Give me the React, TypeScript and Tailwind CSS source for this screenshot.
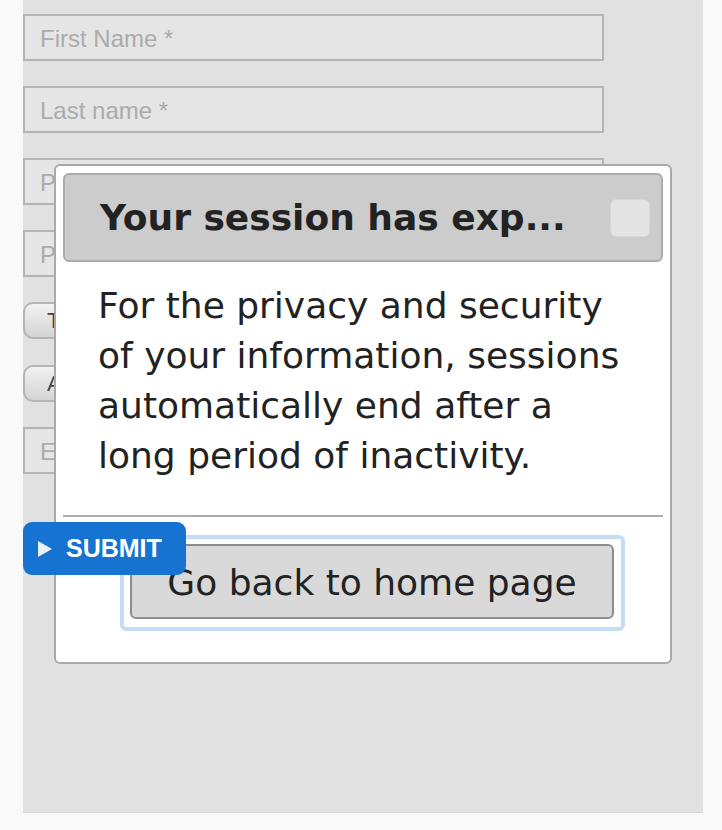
import { X } from "lucide-react";

const arial = "font-['Liberation_Sans',Arial,sans-serif]";
const dejavu = "font-['DejaVu_Sans',Verdana,sans-serif]";

function Field({ label }: { label: string }) {
  return (
    <div
      className={`flex h-[47px] w-[581px] items-center border-2 border-[#b4b4b4] bg-[#e5e5e5] pl-[15px] pt-[2px] text-[24px] text-[#ababab] ${arial}`}
    >
      {label}
    </div>
  );
}

function Pill({ label }: { label: string }) {
  return (
    <div
      className={`flex h-[37px] w-[140px] items-center rounded-[10px] border-2 border-[#b4b4b4] bg-gradient-to-b from-[#f2f2f2] to-[#d4d4d4] pl-[22px] text-[22px] text-[#444] ${arial}`}
    >
      {label}
    </div>
  );
}

export default function App() {
  return (
    <div className="relative min-h-[830px] bg-[#f9f9f9]">
      {/* Form panel behind the dialog */}
      <div className="ml-[23px] flex h-[813px] w-[680px] flex-col border-b border-[#d8d8d8] bg-[#e1e1e1] pt-[14px]">
        <div className="flex flex-col gap-[25px]">
          <Field label="First Name *" />
          <Field label="Last name *" />
          <Field label="Phone *" />
          <Field label="Postcode *" />
        </div>
        <div className="mt-[25px] flex flex-col gap-[26px]">
          <Pill label="Title" />
          <Pill label="Age" />
        </div>
        <div className="mt-[25px]">
          <Field label="Email *" />
        </div>
      </div>

      {/* Session expired dialog */}
      <div
        className={`absolute left-[54px] top-[164px] flex h-[500px] w-[618px] flex-col rounded-[6px] border-2 border-[#a9a9a9] bg-white p-[7px] ${dejavu}`}
      >
        <div className="flex h-[89px] items-center justify-between rounded-[6px] border-2 border-[#acacac] bg-[#cccccc] pl-[35px] pr-[11px]">
          <h1 className="text-[36px] font-bold text-[#222]">Your session has exp...</h1>
          <button
            type="button"
            aria-label="Close"
            className="flex h-[38px] w-[40px] items-center justify-center rounded-[6px] border border-[#d6d6d6] bg-[#e4e4e4] text-transparent"
          >
            <X className="h-5 w-5" />
          </button>
        </div>
        <p className="px-[35px] pt-[19px] text-[36px] leading-[50px] text-[#222]">
          For the privacy and security of your information, sessions automatically end after a long
          period of inactivity.
        </p>
        <div className="mt-[34px] border-t-2 border-[#acacac]" />
        <div className="flex pt-[18px]">
          <div className="ml-[57px] rounded-[6px] border-[4px] border-[#c3ddf6] pb-[8px] pl-[6px] pr-[7px] pt-[5px]">
            <button
              type="button"
              className="h-[75px] w-[484px] rounded-[6px] border-2 border-[#8c8c8c] bg-[#d9d9d9] pt-[3px] text-[36px] text-[#222]"
            >
              Go back to home page
            </button>
          </div>
        </div>
      </div>

      {/* Floating submit button */}
      <button
        type="button"
        className={`absolute left-[23px] top-[522px] flex h-[53px] w-[163px] items-center gap-[14px] rounded-[9px] bg-[#1773d1] pl-[15px] text-[25px] font-bold text-white ${arial}`}
      >
        <svg width="14" height="16" viewBox="0 0 14 16" aria-hidden="true">
          <path d="M0 0 L14 8 L0 16 Z" fill="#e8f0fb" />
        </svg>
        SUBMIT
      </button>
    </div>
  );
}
